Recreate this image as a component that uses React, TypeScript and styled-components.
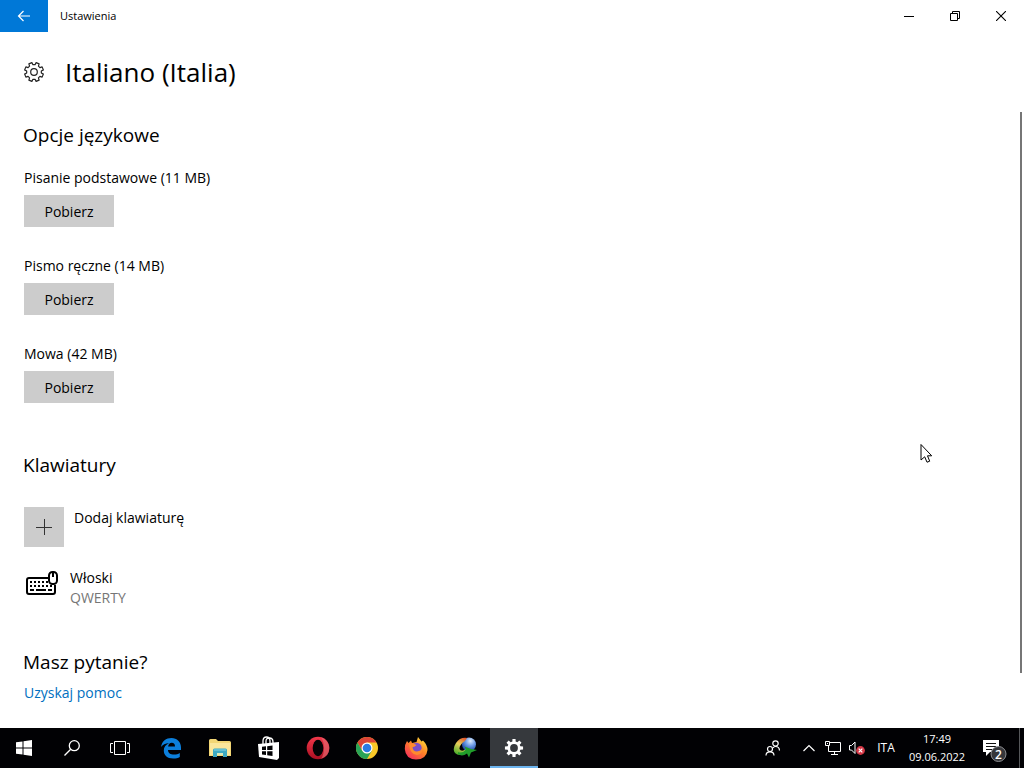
import React from "react";
import styled, { createGlobalStyle } from "styled-components";

const GlobalStyle = createGlobalStyle`
  *, *::before, *::after { box-sizing: border-box; }
  body { margin: 0; background: #fff; color: #000; }
  body, button { font-family: "Segoe UI", "Open Sans", "Noto Sans", sans-serif; }
  h1, h2, p { margin: 0; font-weight: 400; }
  button { margin: 0; padding: 0; border: 0; background: none; color: inherit; }
  svg { display: block; flex: none; }
`;

const Screen = styled.div`
  display: flex;
  flex-direction: column;
  min-height: 100vh;
`;

const TitleBar = styled.header`
  display: flex;
  align-items: center;
  height: 32px;
`;

const BackButton = styled.button`
  display: grid;
  place-items: center;
  width: 48px;
  height: 32px;
  background: #0078d7;
`;

const WindowName = styled.p`
  flex: 1;
  padding-left: 12px;
  font-size: 11px;
  line-height: 16px;
`;

const WindowButton = styled.button`
  display: grid;
  place-items: center;
  width: 46px;
  height: 32px;
`;

const PageHeader = styled.div`
  display: flex;
  align-items: center;
  gap: 20px;
  height: 80px;
  padding-left: 23px;
`;

const PageTitle = styled.h1`
  font-size: 26px;
  line-height: 36px;
`;

const Body = styled.div`
  display: flex;
  flex: 1;
`;

const Content = styled.main`
  flex: 1;
  padding: 11px 24px 24px;
`;

const Rail = styled.div`
  width: 2px;
  margin-right: 2px;
`;

const Thumb = styled.div`
  height: 91%;
  background: #767676;
`;

const Section = styled.section`
  & + & { margin-top: 50px; }
`;

const SectionTitle = styled.h2`
  margin-left: -1px;
  font-size: 19px;
  line-height: 24px;
`;

const Options = styled.div`
  display: flex;
  flex-direction: column;
  gap: 29px;
  padding-top: 21px;
`;

const Option = styled.div`
  display: flex;
  flex-direction: column;
  align-items: flex-start;
  gap: 7px;
`;

const Text = styled.p<{ $muted?: boolean }>`
  font-size: 14px;
  line-height: 20px;
  color: ${(p) => (p.$muted ? "#767676" : "#000")};
`;

const DownloadButton = styled.button`
  width: 90px;
  height: 32px;
  padding-top: 2px;
  background: #ccc;
  font-size: 14px;
  line-height: 20px;
`;

const AddButton = styled.button`
  display: flex;
  align-items: flex-start;
  gap: 10px;
  margin-top: 30px;
  font-size: 14px;
  line-height: 22px;
`;

const AddTile = styled.span`
  display: grid;
  place-items: center;
  width: 40px;
  height: 40px;
  background: #ccc;
`;

const KeyboardRow = styled.div`
  display: flex;
  gap: 10px;
  margin-top: 21px;
`;

const HelpSection = styled(Section)`
  && { margin-top: 42px; }
`;

const HelpLink = styled.a`
  display: inline-block;
  margin-top: 9px;
  font-size: 14px;
  line-height: 20px;
  color: #0070c0;
  text-decoration: none;
`;

const TaskBar = styled.footer`
  display: flex;
  justify-content: space-between;
  height: 40px;
  background: #010104;
  color: #fff;
`;

const TaskGroup = styled.div<{ $gap?: number }>`
  display: flex;
  gap: ${(p) => p.$gap ?? 0}px;
`;

const Apps = styled(TaskGroup)`
  margin-left: 3px;
`;

const TaskButton = styled.button<{ $width?: number; $active?: boolean }>`
  display: grid;
  place-items: center;
  width: ${(p) => p.$width ?? 48}px;
  height: 40px;
  font-size: 12px;
  line-height: 18px;
  background: ${(p) => (p.$active ? "#36393d" : "none")};
  box-shadow: ${(p) => (p.$active ? "inset 0 -2px #6cb4ee" : "none")};
`;

const Clock = styled(TaskButton)`
  align-content: center;
  font-size: 11px;
`;

const ShowDesktop = styled.button`
  width: 5px;
  height: 40px;
  border-left: 1px solid #55575a;
`;

const Pointer = styled.svg`
  position: absolute;
  left: 920px;
  top: 443px;
`;

function toothedRing(c: number, outer: number, inner: number) {
  const points: string[] = [];
  for (let i = 0; i < 8; i++) {
    const mid = (i * Math.PI) / 4;
    const corners = [
      [inner, -0.25],
      [outer, -0.17],
      [outer, 0.17],
      [inner, 0.25],
    ];
    for (const [r, d] of corners) {
      points.push(`${(c + r * Math.sin(mid + d)).toFixed(2)} ${(c - r * Math.cos(mid + d)).toFixed(2)}`);
    }
  }
  return `M${points.join("L")}Z`;
}

const OutlineGear = () => (
  <svg width="22" height="22" viewBox="0 0 22 22" fill="none" stroke="#222" strokeWidth="1.200" strokeLinejoin="round">
    <path transform="rotate(22.5 11 11)" d={toothedRing(11, 9.6, 7.4)} />
    <circle cx="11" cy="11" r="3.3" />
  </svg>
);

const SolidGear = () => (
  <svg width="20" height="20" viewBox="0 0 20 20">
    <path d={toothedRing(10, 9.2, 6.6)} fill="#fff" />
    <circle cx="10" cy="10" r="3.9" fill="#36393d" />
  </svg>
);

const KeyboardIcon = () => (
  <svg width="36" height="30" viewBox="0 0 36 30" fill="none" stroke="#000" strokeWidth="2">
    <path d="M24 10H5Q3 10 3 12V24Q3 26 5 26H29Q31 26 31 24V17" />
    <path d="M6 14H8M10 14H12M14 14H16M18 14H20M22 14H24" />
    <path d="M6 18H8M10 18H12M14 18H16M18 18H20M22 18H24M26 18H28" />
    <path d="M6 22H10M12 22H22M24 22H28" />
    <rect x="25" y="4" width="8" height="12" rx="3.5" fill="#fff" />
    <path d="M29 4V9" />
  </svg>
);

const EdgeIcon = () => (
  <svg width="22" height="22" viewBox="0 0 22 22">
    <path
      fill="#0c7fdc"
      d="M1 10C2 4 6 1 11.500 1C17 1 21 5 21 10.500V13H8C8 16 10.500 17.600 14 17.600C16.300 17.600 18.300 17 19.800 16V20C18 21 16 21.500 13.200 21.500C7 21.500 3.800 18 3.800 13.500C3.800 10 5.800 7.600 9 6.300C5.500 6.500 2.500 7.800 1 10ZM8.100 9.500H15C15 7 13.800 5.800 11.800 5.800C9.800 5.800 8.500 7.200 8.100 9.500Z"
    />
  </svg>
);

const ExplorerIcon = () => (
  <svg width="22" height="20" viewBox="0 0 22 20">
    <path d="M0 2.500Q0 1 1.500 1H7L9 3H20.500Q22 3 22 4.500V18H0Z" fill="#f3d675" />
    <path d="M1 5H21V17H1Z" fill="#fbe69b" />
    <path d="M4 19V12Q4 10.500 5.500 10.500H16.500Q18 10.500 18 12V19H14V15H8V19Z" fill="#3ca9c3" />
    <path d="M5 12H17" stroke="#8bd6e4" strokeWidth="1" />
    <path d="M8 15H14V17H8Z" fill="#d8e8bc" />
  </svg>
);

const StoreIcon = () => (
  <svg width="22" height="24" viewBox="0 0 22 24">
    <path d="M5 9V5Q5 1 8.500 1Q12 1 12 5V7M8 8V5Q8 2 11.500 2Q15 2 15 6V7" fill="none" stroke="#fff" strokeWidth="1.3" />
    <path d="M0 8L21 6V22L19 24L1 21Z" fill="#fff" />
    <path d="M4 10.700L8 10.300V14H4ZM9.200 10.200L14.500 9.600V14H9.200ZM4 15.200H8V19L4 18.500ZM9.200 15.200H14.500V19.900L9.200 19.200Z" fill="#020204" />
  </svg>
);

const OperaIcon = () => (
  <svg width="24" height="24" viewBox="0 0 24 24">
    <defs>
      <linearGradient id="opera" x1="0" y1="0" x2="0" y2="1">
        <stop offset="0" stopColor="#f2384a" />
        <stop offset="1" stopColor="#a90f22" />
      </linearGradient>
    </defs>
    <ellipse cx="12" cy="12" rx="11.300" ry="11.300" fill="url(#opera)" />
    <path d="M15 1.200Q23.300 4 23.300 12T15 22.800Q18 19 18 12T15 1.200Z" fill="#e86a71" opacity=".65" />
    <ellipse cx="12" cy="12" rx="5.300" ry="8.200" fill="#030305" />
  </svg>
);

const ChromeIcon = () => (
  <svg width="22" height="22" viewBox="0 0 22 22">
    <circle cx="11" cy="11" r="11" fill="#f9c828" />
    <path d="M1.470 5.500A11 11 0 0 1 20.530 5.500H11L6.200 13.800Z" fill="#db4437" />
    <path d="M1.470 5.500A11 11 0 0 0 11 22L15.800 13.800L11 16.500L6.200 13.800Z" fill="#29a457" />
    <circle cx="11" cy="11" r="5.500" fill="#fff" />
    <circle cx="11" cy="11" r="4.300" fill="#2b7be4" />
  </svg>
);

const FirefoxIcon = () => (
  <svg width="24" height="24" viewBox="0 0 24 24">
    <defs>
      <linearGradient id="fox" x1="1" y1="0" x2="0.200" y2="1">
        <stop offset="0.100" stopColor="#ffdf3c" />
        <stop offset="0.500" stopColor="#ff8426" />
        <stop offset="1" stopColor="#f52d5c" />
      </linearGradient>
    </defs>
    <path d="M3 5L4.500 7L7 4.500L8 7L12.500 6L14 1L17.500 5.500L19 4.500Q23.500 9 23.500 14Q22.500 23.500 12 23.500Q1.500 23 .800 13Q.800 8 3 5Z" fill="url(#fox)" />
    <circle cx="12.500" cy="12" r="5.200" fill="#7b4fc8" />
    <path d="M5 8Q9 6.500 12.500 9Q11 11 8.500 11.300Q9 15.500 13 15.500Q17 15 18.200 12Q19 18 13 19Q6 18.500 5 8Z" fill="#ff8b2e" />
  </svg>
);

const GlobeArrowIcon = () => (
  <svg width="24" height="22" viewBox="0 0 24 22">
    <defs>
      <radialGradient id="globe" cx="0.600" cy="0.250" r="0.700">
        <stop offset="0" stopColor="#e2effc" />
        <stop offset="0.500" stopColor="#6d9be6" />
        <stop offset="1" stopColor="#244da5" />
      </radialGradient>
      <linearGradient id="swoosh" x1="0.800" y1="0" x2="0.400" y2="1">
        <stop offset="0" stopColor="#e2552b" />
        <stop offset="0.450" stopColor="#e8cf5a" />
        <stop offset="1" stopColor="#4fae2c" />
      </linearGradient>
    </defs>
    <circle cx="16" cy="7.500" r="7" fill="url(#globe)" />
    <path d="M14 1Q7 0 3 6Q-1 12 2 16Q6 20 13 16V12.500Q8 15 6.500 12Q6 8 12 4Z" fill="url(#swoosh)" />
    <path d="M5 15Q9 17 13 12.500L11.500 9.500L18 12L24 13L18 15.500L16 20.500L14 16.500Q9 20 5 17Z" fill="#219e2b" />
  </svg>
);

const downloads = [
  "Pisanie podstawowe (11 MB)",
  "Pismo ręczne (14 MB)",
  "Mowa (42 MB)",
];

const apps = [
  { name: "Microsoft Edge", icon: <EdgeIcon /> },
  { name: "Eksplorator plików", icon: <ExplorerIcon /> },
  { name: "Sklep", icon: <StoreIcon /> },
  { name: "Opera", icon: <OperaIcon /> },
  { name: "Chrome", icon: <ChromeIcon /> },
  { name: "Firefox", icon: <FirefoxIcon /> },
  { name: "Download Manager", icon: <GlobeArrowIcon /> },
  { name: "Ustawienia", icon: <SolidGear />, active: true },
];

export default function App() {
  return (
    <Screen>
      <GlobalStyle />
      <TitleBar>
        <BackButton aria-label="Wstecz">
          <svg width="14" height="12" viewBox="0 0 14 12" fill="none" stroke="#fff" strokeWidth="1.200">
            <path d="M13 6H1.500M6.500 1L1.500 6L6.500 11" />
          </svg>
        </BackButton>
        <WindowName>Ustawienia</WindowName>
        <WindowButton aria-label="Minimalizuj">
          <svg width="10" height="10" viewBox="0 0 10 10"><path d="M0 5.500H10" stroke="#000" /></svg>
        </WindowButton>
        <WindowButton aria-label="Przywróć">
          <svg width="10" height="10" viewBox="0 0 10 10" fill="none" stroke="#000">
            <path d="M.5 2.500H7.500V9.500H.5ZM2.500 2.500V.5H9.500V7.500H7.500" />
          </svg>
        </WindowButton>
        <WindowButton aria-label="Zamknij">
          <svg width="10" height="10" viewBox="0 0 10 10"><path d="M0 0L10 10M10 0L0 10" stroke="#000" strokeWidth="1.100" /></svg>
        </WindowButton>
      </TitleBar>

      <PageHeader>
        <OutlineGear />
        <PageTitle>Italiano (Italia)</PageTitle>
      </PageHeader>

      <Body>
        <Content>
          <Section>
            <SectionTitle>Opcje językowe</SectionTitle>
            <Options>
              {downloads.map((label) => (
                <Option key={label}>
                  <Text>{label}</Text>
                  <DownloadButton>Pobierz</DownloadButton>
                </Option>
              ))}
            </Options>
          </Section>

          <Section>
            <SectionTitle>Klawiatury</SectionTitle>
            <AddButton>
              <AddTile>
                <svg width="16" height="16" viewBox="0 0 16 16"><path d="M0 8.500H16M8.500 0V16" stroke="#333" /></svg>
              </AddTile>
              Dodaj klawiaturę
            </AddButton>
            <KeyboardRow>
              <KeyboardIcon />
              <div>
                <Text>Włoski</Text>
                <Text $muted>QWERTY</Text>
              </div>
            </KeyboardRow>
          </Section>

          <HelpSection>
            <SectionTitle>Masz pytanie?</SectionTitle>
            <HelpLink href="#pomoc">Uzyskaj pomoc</HelpLink>
          </HelpSection>
        </Content>
        <Rail>
          <Thumb />
        </Rail>
      </Body>

      <TaskBar>
        <TaskGroup>
          <TaskButton aria-label="Start">
            <svg width="16" height="16" viewBox="0 0 16 16" fill="#fff">
              <path d="M0 2.300L6.500 1.400V7.500H0ZM7.500 1.200L16 0V7.500H7.500ZM0 8.500H6.500V14.600L0 13.700ZM7.500 8.500H16V16L7.500 14.800Z" />
            </svg>
          </TaskButton>
          <TaskButton aria-label="Szukaj">
            <svg width="16" height="16" viewBox="0 0 16 16" fill="none" stroke="#fff" strokeWidth="1.300">
              <circle cx="10.300" cy="5.700" r="5" />
              <path d="M6.700 9.300L.5 15.500" />
            </svg>
          </TaskButton>
          <TaskButton aria-label="Widok zadań">
            <svg width="20" height="14" viewBox="0 0 20 14" fill="none" stroke="#fff">
              <path d="M4.500 .5H15.500V13.500H4.500ZM3 2.500H.5V11.500H3M17 2.500H19.500V11.500H17" />
            </svg>
          </TaskButton>
          <Apps $gap={1}>
            {apps.map((app) => (
              <TaskButton key={app.name} aria-label={app.name} $active={app.active}>
                {app.icon}
              </TaskButton>
            ))}
          </Apps>
        </TaskGroup>
        <TaskGroup>
          <TaskButton aria-label="Kontakty">
            <svg width="16" height="16" viewBox="0 0 16 16" fill="none" stroke="#fff" strokeWidth="1.200">
              <circle cx="5" cy="9" r="2.500" />
              <path d="M1 15.500Q1 11.800 5 11.800T9 15.500" />
              <circle cx="10.500" cy="3.500" r="2.700" />
              <path d="M8 7.800Q9 6.500 10.500 6.500Q14.300 6.500 14.500 10.500" />
            </svg>
          </TaskButton>
          <TaskButton aria-label="Pokaż ukryte ikony" $width={24}>
            <svg width="12" height="8" viewBox="0 0 12 8" fill="none" stroke="#fff" strokeWidth="1.200"><path d="M.5 7L6 1.500L11.500 7" /></svg>
          </TaskButton>
          <TaskButton aria-label="Sieć" $width={24}>
            <svg width="16" height="14" viewBox="0 0 16 14" fill="none" stroke="#fff">
              <path d="M5 1.500H15.500V10.500H3.500V5M9.500 10.500V13M6 13.500H13" />
              <path d="M.5 .5H4.500V4.500H.5ZM2.500 2V3" />
            </svg>
          </TaskButton>
          <TaskButton aria-label="Głośność" $width={24}>
            <svg width="16" height="14" viewBox="0 0 16 14" fill="none">
              <path d="M.5 4.500H2.500L6 1V12.500L2.500 9H.5Z" stroke="#fff" />
              <circle cx="11.500" cy="9.500" r="4.400" fill="#d43746" />
              <path d="M9.700 7.700L13.300 11.300M13.300 7.700L9.700 11.300" stroke="#fff" strokeWidth="1.200" />
            </svg>
          </TaskButton>
          <TaskButton $width={34}>ITA</TaskButton>
          <Clock $width={68}>
            <span>17:49</span>
            <span>09.06.2022</span>
          </Clock>
          <TaskButton aria-label="Powiadomienia: 2">
            <svg width="26" height="28" viewBox="0 0 26 28">
              <path d="M1 6H17V18H8L4 22V18H1Z" fill="#fff" />
              <path d="M4 9.500H14M4 12.500H14M4 15.500H10" stroke="#111" />
              <circle cx="16.500" cy="20" r="7.500" fill="#36373b" stroke="#8d8e92" />
              <text x="16.500" y="24.500" textAnchor="middle" fontSize="12" fontWeight="600" fill="#fff">2</text>
            </svg>
          </TaskButton>
          <ShowDesktop aria-label="Pokaż pulpit" />
        </TaskGroup>
      </TaskBar>

      <Pointer width="13" height="21" viewBox="0 0 13 21" aria-hidden="true">
        <path d="M1 1.500V17L4.700 13.800L7 19.200L9.700 18.200L7.500 12.800H11.700Z" fill="#fff" stroke="#000" />
      </Pointer>
    </Screen>
  );
}
